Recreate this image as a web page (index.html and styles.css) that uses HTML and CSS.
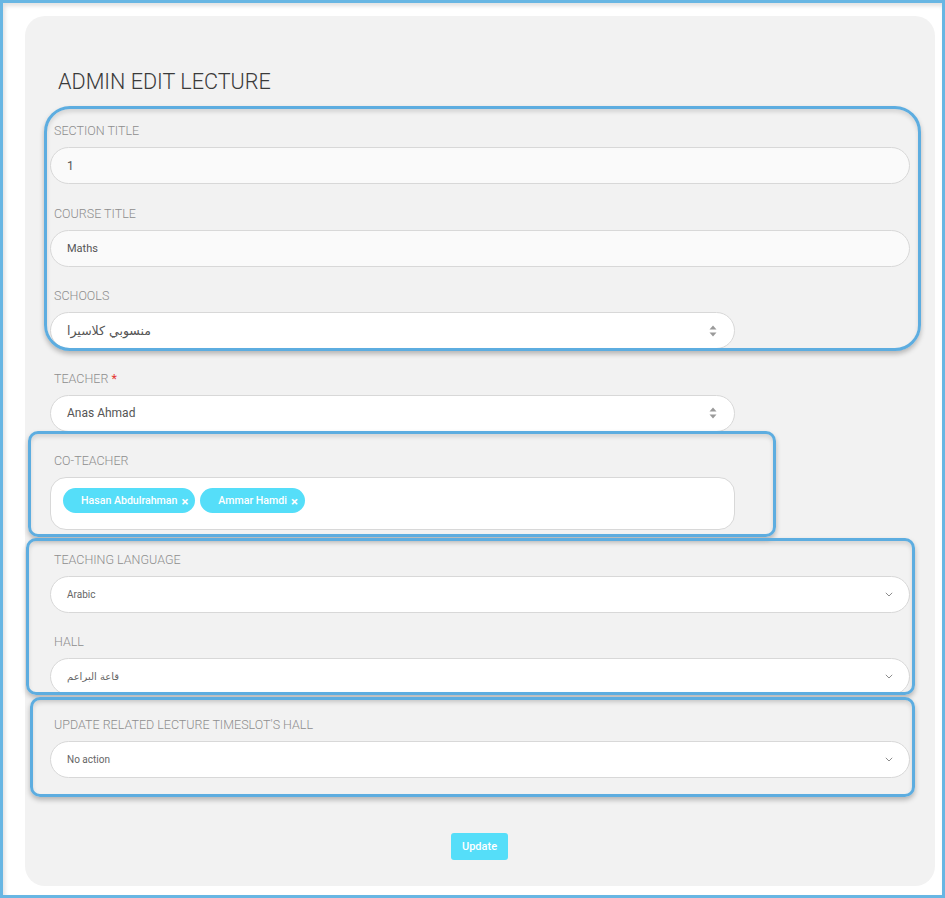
FILE: index.html
```html
<!DOCTYPE html>
<html lang="en">
<head>
    <meta charset="UTF-8">
    <meta name="viewport" content="width=device-width, initial-scale=1.0">
    <title>Admin Edit Lecture</title>
    <link rel="stylesheet" href="styles.css">
</head>
<body>
    <div class="frame">
        <div class="card">
            <h1>ADMIN EDIT LECTURE</h1>
            <form class="lecture-form">
                <div class="input-group">
                    <label>SECTION TITLE</label>
                    <input type="text" class="field soft" value="1">
                </div>
                <div class="input-group">
                    <label>COURSE TITLE</label>
                    <input type="text" class="field soft small" value="Maths">
                </div>
                <div class="input-group">
                    <label>SCHOOLS</label>
                    <div class="field select half">
                        <span class="ar">منسوبي كلاسيرا</span>
                        <svg class="updown" width="8" height="12" viewBox="0 0 8 12"><path d="M4 0.5 L7.5 4.5 L0.5 4.5 Z M4 11.5 L7.5 7.5 L0.5 7.5 Z" fill="#9a9a9a"/></svg>
                    </div>
                </div>
                <div class="input-group">
                    <label>TEACHER <span class="req">*</span></label>
                    <div class="field select half">
                        <span>Anas Ahmad</span>
                        <svg class="updown" width="8" height="12" viewBox="0 0 8 12"><path d="M4 0.5 L7.5 4.5 L0.5 4.5 Z M4 11.5 L7.5 7.5 L0.5 7.5 Z" fill="#9a9a9a"/></svg>
                    </div>
                </div>
                <div class="input-group">
                    <label>CO-TEACHER</label>
                    <div class="field tags half">
                        <span class="tag">Hasan Abdulrahman <b>×</b></span>
                        <span class="tag">Ammar Hamdi <b>×</b></span>
                    </div>
                </div>
                <div class="input-group">
                    <label>TEACHING LANGUAGE</label>
                    <div class="field select tiny">
                        <span>Arabic</span>
                        <svg class="chev" width="8" height="5" viewBox="0 0 8 5"><path d="M0.8 0.8 L4 4 L7.2 0.8" fill="none" stroke="#8c8c8c" stroke-width="1"/></svg>
                    </div>
                </div>
                <div class="input-group">
                    <label>HALL</label>
                    <div class="field select tiny">
                        <span class="ar">قاعة البراعم</span>
                        <svg class="chev" width="8" height="5" viewBox="0 0 8 5"><path d="M0.8 0.8 L4 4 L7.2 0.8" fill="none" stroke="#8c8c8c" stroke-width="1"/></svg>
                    </div>
                </div>
                <div class="input-group">
                    <label>UPDATE RELATED LECTURE TIMESLOT'S HALL</label>
                    <div class="field select tiny">
                        <span>No action</span>
                        <svg class="chev" width="8" height="5" viewBox="0 0 8 5"><path d="M0.8 0.8 L4 4 L7.2 0.8" fill="none" stroke="#8c8c8c" stroke-width="1"/></svg>
                    </div>
                </div>
                <div class="actions">
                    <button type="button">Update</button>
                </div>
            </form>
        </div>

        <!-- highlight boxes drawn over the form -->
        <div class="mark mark-1"></div>
        <div class="mark mark-2"></div>
        <div class="mark mark-3"></div>
        <div class="mark mark-4"></div>
    </div>
</body>
</html>
```

FILE: styles.css
```css
/* Global */
body {
    margin: 0;
    background-color: #fff;
    font-family: Roboto, "Noto Sans", "DejaVu Sans", sans-serif;
}
.frame {
    position: relative;
    height: 898px;
    box-sizing: border-box;
    border: 3px solid #68b6e3;
    box-shadow: inset 2px 3px 4px rgba(0, 0, 0, 0.12);
    padding: 13px 7px 9px 22px;
}
.card {
    height: 100%;
    box-sizing: border-box;
    background-color: #f2f2f2;
    border-radius: 20px;
    padding: 53px 25px 0;
}
h1 {
    margin: 0 0 0 8px;
    font-size: 21.6px;
    line-height: 26px;
    font-weight: 300;
    color: #3a3a3a;
}
.lecture-form {
    margin-top: 28px;
}
.input-group {
    margin-bottom: 21.5px;
}
.input-group.last {
    margin-bottom: 0;
}
.input-group label {
    display: block;
    padding-left: 4px;
    margin-bottom: 8px;
    font-size: 12.5px;
    line-height: 16px;
    font-weight: 300;
    color: #8e8e8e;
}
.req {
    color: #e53935;
    font-weight: 400;
}
.field {
    box-sizing: border-box;
    width: 100%;
    height: 37px;
    border: 1px solid #d8d8d8;
    border-radius: 19px;
    background-color: #fff;
    padding: 0 16px;
    font-family: inherit;
    font-size: 12px;
    color: #555;
    outline: none;
}
.field.soft {
    background-color: #fafafa;
}
.field.small {
    font-size: 11px;
}
.field.half {
    width: 685px;
}
.select {
    display: flex;
    align-items: center;
    justify-content: space-between;
}
.select.tiny {
    font-size: 10px;
    color: #666;
    padding-right: 16px;
}
.select .ar {
    font-family: "DejaVu Sans", sans-serif;
    font-size: 12.5px;
}
.select.tiny .ar {
    font-size: 10px;
}
.updown {
    margin-right: 1px;
}
.tags {
    height: 53px;
    border-radius: 16px;
    padding: 10px 12px;
    display: flex;
    align-items: flex-start;
    gap: 5px;
}
.tag {
    display: inline-flex;
    align-items: center;
    height: 25px;
    border-radius: 13px;
    background-color: #55def9;
    color: #fff;
    font-size: 10.6px;
    font-weight: 500;
    padding: 0 7px 0 18px;
    box-sizing: border-box;
}
.tag b {
    margin-left: 4px;
    font-size: 13px;
    margin-top: 1px;
}
.actions {
    text-align: center;
    padding-top: 34px;
}
button {
    width: 57px;
    height: 27px;
    border: none;
    border-radius: 3px;
    background-color: #55def9;
    color: #fff;
    font-family: inherit;
    font-size: 11px;
    font-weight: 500;
    cursor: pointer;
    margin-left: -1px;
}
button:hover {
    background-color: #3fcfed;
}

/* Highlight boxes */
.mark {
    position: absolute;
    box-sizing: border-box;
    border: 3px solid #5dade0;
    border-radius: 10px;
    box-shadow: 0 3px 5px rgba(0, 0, 0, 0.25), inset 0 3px 4px rgba(0, 0, 0, 0.12);
    pointer-events: none;
}
.mark-1 {
    left: 41px;
    top: 103px;
    width: 877px;
    height: 245px;
    border-radius: 26px;
}
.mark-2 {
    left: 25px;
    top: 428px;
    width: 748px;
    height: 106px;
}
.mark-3 {
    left: 23px;
    top: 535px;
    width: 889px;
    height: 157px;
}
.mark-4 {
    left: 27px;
    top: 694px;
    width: 885px;
    height: 100px;
}
```
